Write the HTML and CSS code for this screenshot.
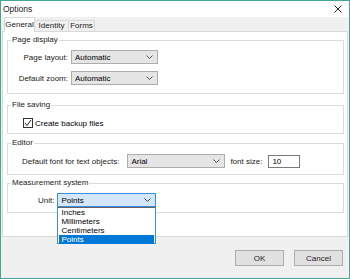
FILE: index.html
```html
<!DOCTYPE html>
<html lang="en">
<head>
    <meta charset="UTF-8">
    <title>Options</title>
    <link rel="stylesheet" href="styles.css">
</head>
<body>
    <div class="window">
        <div class="titlebar">
            <span class="title">Options</span>
            <svg class="close" width="8" height="8" viewBox="0 0 8 8">
                <path d="M0.5 0.5 L7.5 7.5 M7.5 0.5 L0.5 7.5" stroke="#222" stroke-width="1" fill="none"/>
            </svg>
        </div>
        <div class="client">
            <div class="tabs">
                <div class="tab tab-general active">General</div>
                <div class="tab tab-identity">Identity</div>
                <div class="tab tab-forms">Forms</div>
            </div>
            <div class="page">
                <!-- Page display -->
                <div class="group group-display">
                    <span class="legend">Page display</span>
                    <div class="form-grid">
                        <label class="lbl">Page layout:</label>
                        <div class="combo combo-wide">Automatic<svg class="chev" width="7" height="4" viewBox="0 0 7 4"><path d="M0.5 0.5 L3.5 3.5 L6.5 0.5" stroke="#555" fill="none"/></svg></div>
                        <label class="lbl">Default zoom:</label>
                        <div class="combo combo-wide">Automatic<svg class="chev" width="7" height="4" viewBox="0 0 7 4"><path d="M0.5 0.5 L3.5 3.5 L6.5 0.5" stroke="#555" fill="none"/></svg></div>
                    </div>
                </div>

                <!-- File saving -->
                <div class="group group-saving">
                    <span class="legend">File saving</span>
                    <div class="check-row">
                        <span class="checkbox">
                            <svg width="8" height="8" viewBox="0 0 8 8"><path d="M1 4 L3 6.5 L7 1" stroke="#222" stroke-width="1" fill="none"/></svg>
                        </span>
                        <span>Create backup files</span>
                    </div>
                </div>

                <!-- Editor -->
                <div class="group group-editor">
                    <span class="legend">Editor</span>
                    <div class="editor-row">
                        <label class="lbl-plain">Default font for text objects:</label>
                        <div class="combo combo-font">Arial<svg class="chev" width="7" height="4" viewBox="0 0 7 4"><path d="M0.5 0.5 L3.5 3.5 L6.5 0.5" stroke="#555" fill="none"/></svg></div>
                        <label class="lbl-size">font size:</label>
                        <div class="textbox">10</div>
                    </div>
                </div>

                <!-- Measurement system -->
                <div class="group group-measure">
                    <span class="legend">Measurement system</span>
                    <div class="unit-row">
                        <label class="lbl-plain">Unit:</label>
                        <div class="combo combo-unit focused">Points<svg class="chev" width="7" height="4" viewBox="0 0 7 4"><path d="M0.5 0.5 L3.5 3.5 L6.5 0.5" stroke="#444" fill="none"/></svg>
                            <ul class="dropdown">
                                <li>Inches</li>
                                <li>Millimeters</li>
                                <li>Centimeters</li>
                                <li class="selected">Points</li>
                            </ul>
                        </div>
                    </div>
                </div>
            </div>
            <div class="footer">
                <button class="btn">OK</button>
                <button class="btn">Cancel</button>
            </div>
        </div>
    </div>
</body>
</html>
```

FILE: styles.css
```css
/* Basic reset */
* {
    margin: 0;
    padding: 0;
    box-sizing: border-box;
}

body {
    background-color: #ffffff;
    font-family: "Liberation Sans", Arial, sans-serif;
    font-size: 8px;
    color: #000;
}

/* Window frame */
.window {
    width: 350px;
    height: 279px;
    border: 1px solid #47a596;
    display: flex;
    flex-direction: column;
    background-color: #ffffff;
}

.titlebar {
    height: 16px;
    display: flex;
    align-items: center;
    justify-content: space-between;
    padding: 0 7px 0 2px;
    background-color: #ffffff;
}

.title {
    font-size: 8.5px;
    color: #222;
}

.client {
    flex: 1;
    background-color: #f0f0f0;
    display: flex;
    flex-direction: column;
}

/* Tabs */
.tabs {
    height: 14px;
    display: flex;
    align-items: flex-end;
    padding-left: 3px;
}

.tab {
    height: 11px;
    line-height: 10px;
    text-align: center;
    border: 1px solid #d9d9d9;
    border-bottom: none;
    background-color: #f0f0f0;
    color: #222;
}

.tab.active {
    height: 15px;
    line-height: 13px;
    margin-bottom: -1px;
    background-color: #ffffff;
    position: relative;
    z-index: 1;
}

.tab-general { width: 31px; }
.tab-identity { width: 34px; border-left: none; }
.tab-forms { width: 26px; border-left: none; }

/* Tab page */
.page {
    height: 206px;
    margin: 0 1px;
    padding: 0 3px 0 4px;
    border: 1px solid #d9d9d9;
    background-color: #ffffff;
    display: flex;
    flex-direction: column;
}

/* Group boxes */
.group {
    border: 1px solid #dcdcdc;
}

.group-display { height: 54px; margin-top: 8px; }
.group-saving { height: 29px; margin-top: 11px; }
.group-editor { height: 32px; margin-top: 9px; }
.group-measure { height: 30px; margin-top: 8px; }

.legend {
    display: block;
    width: fit-content;
    margin: -6px 0 0 3px;
    padding: 0 1px;
    line-height: 10px;
    background-color: #ffffff;
    color: #222;
}

.form-grid {
    display: grid;
    grid-template-columns: 60px 87px;
    column-gap: 3px;
    row-gap: 7px;
    margin-top: 5px;
    align-items: center;
}

.lbl {
    text-align: right;
    color: #222;
}

.lbl-plain {
    color: #222;
}

/* Combo boxes */
.combo {
    height: 14px;
    display: flex;
    align-items: center;
    justify-content: space-between;
    padding: 0 4px 0 3px;
    border: 1px solid #adadad;
    background-color: #e5e5e5;
    position: relative;
}

.combo-wide { width: 87px; }
.combo-font { width: 98px; margin-left: 8px; }
.combo-unit { width: 99px; margin-left: 3px; }

.combo.focused {
    background-color: #d3e7f8;
    border-color: #3d8ee0;
}

.dropdown {
    list-style: none;
    position: absolute;
    top: 13px;
    left: -1px;
    width: 99px;
    height: 37px;
    padding: 0 1px;
    border: 1px solid #3d8ee0;
    border-top: 1px solid #646464;
    background-color: #ffffff;
    z-index: 2;
}

.dropdown li {
    height: 9px;
    line-height: 9px;
    padding-left: 2px;
}

.dropdown li.selected {
    background-color: #0078d7;
    color: #ffffff;
}

/* Check box */
.check-row {
    display: flex;
    align-items: center;
    gap: 2px;
    margin: 8px 0 0 15px;
    height: 10px;
}

.checkbox {
    width: 10px;
    height: 10px;
    border: 1px solid #333;
    background-color: #ffffff;
    display: flex;
    align-items: center;
    justify-content: center;
}

/* Editor row */
.editor-row {
    display: flex;
    align-items: center;
    margin: 6px 0 0 14px;
}

.lbl-size {
    margin-left: 5px;
    color: #222;
}

.textbox {
    width: 32px;
    height: 13px;
    margin-left: 6px;
    padding-left: 3px;
    line-height: 11px;
    border: 1px solid #7a7a7a;
    background-color: #ffffff;
}

/* Unit row */
.unit-row {
    display: flex;
    align-items: center;
    margin: 5px 0 0 30px;
}

/* Footer buttons */
.footer {
    flex: 1;
    display: flex;
    justify-content: flex-end;
    align-items: flex-start;
    gap: 10px;
    padding: 13px 6px 0 0;
}

.btn {
    width: 49px;
    height: 16px;
    border: 1px solid #adadad;
    background-color: #e1e1e1;
    font-family: "Liberation Sans", Arial, sans-serif;
    font-size: 8px;
    color: #222;
}
```
